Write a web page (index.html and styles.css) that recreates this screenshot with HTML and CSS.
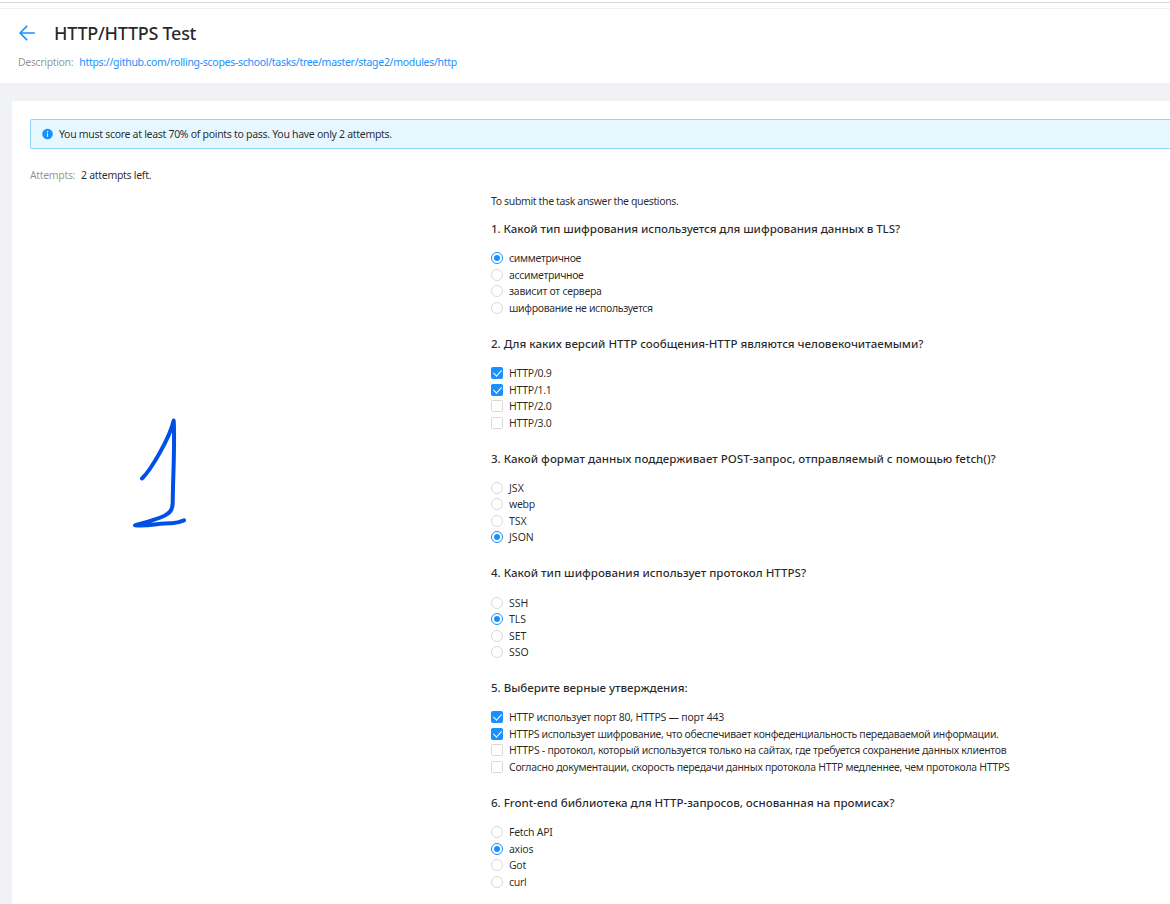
FILE: index.html
```
<!DOCTYPE html>
<html lang="ru">
<head>
<meta charset="utf-8">
<title>HTTP/HTTPS Test</title>
<link rel="stylesheet" href="styles.css">
</head>
<body>
<header class="header">
  <div class="topbar"></div>
  <div class="heading">
    <svg class="back" viewBox="0 0 18 18"><path d="M16.900 9H2.500M9.100 1.900L2.100 9l7 7.100"/></svg>
    <h1 class="title">HTTP/HTTPS Test</h1>
  </div>
  <div class="meta"><span class="label">Description:</span><a class="link">https://github.com/rolling-scopes-school/tasks/tree/master/stage2/modules/http</a></div>
</header>
<main class="card">
  <div class="alert">
    <svg class="info" viewBox="0 0 12 12"><circle cx="5.500" cy="6" r="5.300"/><path d="M5.500 5.200v3.600M5.500 3.100v1.100"/></svg>
    <span class="alert-text">You must score at least 70% of points to pass. You have only 2 attempts.</span>
  </div>
  <div class="attempts"><span class="label">Attempts:</span><span>2 attempts left.</span></div>
  <div class="body">
    <div class="side">
      <svg class="scribble" viewBox="0 0 60 116"><path d="M12 63.500C20 56 39.500 24 43.700 5.500C45 30 43 60 42.700 88C42.500 95 40 98 34 101C25 105 13 108 5 110.300C20 111.500 30 107.800 42 108.300C47 108 51 106.500 54 105.300"/></svg>
    </div>
    <form class="form">
      <p class="intro">To submit the task answer the questions.</p>
      <section class="question">
        <h2 class="q tight">1. Какой тип шифрования используется для шифрования данных в TLS?</h2>
        <div class="opt"><i class="radio on"></i><span class="cyr">симметричное</span></div>
        <div class="opt"><i class="radio"></i><span class="cyr">ассиметричное</span></div>
        <div class="opt"><i class="radio"></i><span>зависит от сервера</span></div>
        <div class="opt"><i class="radio"></i><span class="cyr">шифрование не используется</span></div>
      </section>
      <section class="question">
        <h2 class="q">2. Для каких версий HTTP сообщения-HTTP являются человекочитаемыми?</h2>
        <div class="opt"><i class="box on"></i><span>HTTP/0.9</span></div>
        <div class="opt"><i class="box on"></i><span>HTTP/1.1</span></div>
        <div class="opt"><i class="box"></i><span>HTTP/2.0</span></div>
        <div class="opt"><i class="box"></i><span>HTTP/3.0</span></div>
      </section>
      <section class="question">
        <h2 class="q wide">3. Какой формат данных поддерживает POST-запрос, отправляемый с помощью fetch()?</h2>
        <div class="opt"><i class="radio"></i><span class="caps">JSX</span></div>
        <div class="opt"><i class="radio"></i><span>webp</span></div>
        <div class="opt"><i class="radio"></i><span class="caps">TSX</span></div>
        <div class="opt"><i class="radio on"></i><span class="caps">JSON</span></div>
      </section>
      <section class="question">
        <h2 class="q wide">4. Какой тип шифрования использует протокол HTTPS?</h2>
        <div class="opt"><i class="radio"></i><span class="caps">SSH</span></div>
        <div class="opt"><i class="radio on"></i><span class="caps">TLS</span></div>
        <div class="opt"><i class="radio"></i><span class="caps">SET</span></div>
        <div class="opt"><i class="radio"></i><span class="caps">SSO</span></div>
      </section>
      <section class="question">
        <h2 class="q">5. Выберите верные утверждения:</h2>
        <div class="opt"><i class="box on"></i><span class="mixed">HTTP использует порт 80, HTTPS — порт 443</span></div>
        <div class="opt"><i class="box on"></i><span class="cyr">HTTPS использует шифрование, что обеспечивает конфеденциальность передаваемой информации.</span></div>
        <div class="opt"><i class="box"></i><span>HTTPS - протокол, который используется только на сайтах, где требуется сохранение данных клиентов</span></div>
        <div class="opt"><i class="box"></i><span class="doc">Согласно документации, скорость передачи данных протокола HTTP медленнее, чем протокола HTTPS</span></div>
      </section>
      <section class="question">
        <h2 class="q">6. Front-end библиотека для HTTP-запросов, основанная на промисах?</h2>
        <div class="opt"><i class="radio"></i><span>Fetch API</span></div>
        <div class="opt"><i class="radio on"></i><span>axios</span></div>
        <div class="opt"><i class="radio"></i><span>Got</span></div>
        <div class="opt"><i class="radio"></i><span>curl</span></div>
      </section>
    </form>
  </div>
</main>
</body>
</html>
```
FILE: styles.css
```
* { box-sizing: border-box; }
body {
  margin: 0;
  height: 904px;
  overflow: hidden;
  display: flex;
  flex-direction: column;
  background: #f0f2f5;
  color: rgba(0, 0, 0, .85);
  font: 10.5px/16.5px "Noto Sans", "Open Sans", sans-serif;
  letter-spacing: -.295px;
  white-space: nowrap;
}
.header { height: 83px; background: #fff; flex: none; }
.topbar { height: 9px; border-bottom: 1px solid #f0f0f0; background: linear-gradient(#fff 2px, #d9d9d9 2px, #d9d9d9 3px, #fff 3px); }
.heading { display: flex; align-items: center; height: 24px; margin-top: 12px; padding-left: 18px; }
.back { width: 18px; height: 18px; margin-right: 18px; fill: none; stroke: #1890ff; stroke-width: 1.5; }
.title { margin: 0; font-size: 18px; line-height: 24px; font-weight: 500; letter-spacing: -.28px; }
.meta { display: flex; padding: 9px 0 0 18px; }
.label { color: rgba(0, 0, 0, .45); margin-right: 6px; letter-spacing: -.34px; }
.link { color: #1890ff; letter-spacing: -.29px; }
.card { flex: 1; min-height: 0; margin: 18px 0 0 12px; padding: 18px 0 0 18px; background: #fff; }
.alert { display: flex; align-items: center; height: 30px; padding-left: 11px; border: 1px solid #91d5ff; border-right: 0; border-radius: 2px 0 0 2px; background: #e6f7ff; }
.info { width: 12px; height: 12px; margin-right: 5px; fill: #1890ff; }
.info path { stroke: #fff; stroke-width: 1.1; }
.attempts { display: flex; margin-top: 18px; }
.body { display: flex; margin-top: 9px; }
.side { width: 461px; flex: none; padding: 222px 0 0 100px; }
.scribble { display: block; width: 60px; height: 116px; fill: none; stroke: #0050e6; stroke-width: 4; stroke-linecap: round; stroke-linejoin: round; }
.intro { margin: 0 0 12px; letter-spacing: -.36px; }
.question { height: 114.75px; }
.q { margin: 0 0 12.85px; font-size: 11.6px; line-height: 16.4px; font-weight: 500; letter-spacing: -.04px; }
.q.tight { letter-spacing: -.085px; }
.q.wide { letter-spacing: -.025px; }
.opt { display: flex; align-items: center; height: 16.5px; }
.cyr { letter-spacing: -.325px; }
.mixed { letter-spacing: -.235px; }
.doc { letter-spacing: -.3px; }
.opt span { padding-left: 6px; }
.opt span:not([class]) { letter-spacing: -.275px; }
.caps { letter-spacing: 0; }
.radio, .box { position: relative; flex: none; width: 12px; height: 12px; margin-bottom: .5px; border: 1px solid #d9d9d9; background: #fff; }
.radio { border-radius: 50%; }
.box { border-radius: 1.5px; }
.on { border-color: #1890ff; }
.radio.on::after { content: ""; position: absolute; inset: 2px; border-radius: 50%; background: #1890ff; }
.box.on { background: #1890ff; }
.box.on::after { content: ""; position: absolute; left: 3px; top: 0; width: 4px; height: 7px; border: solid #fff; border-width: 0 1.4px 1.4px 0; transform: rotate(43deg); }
```
